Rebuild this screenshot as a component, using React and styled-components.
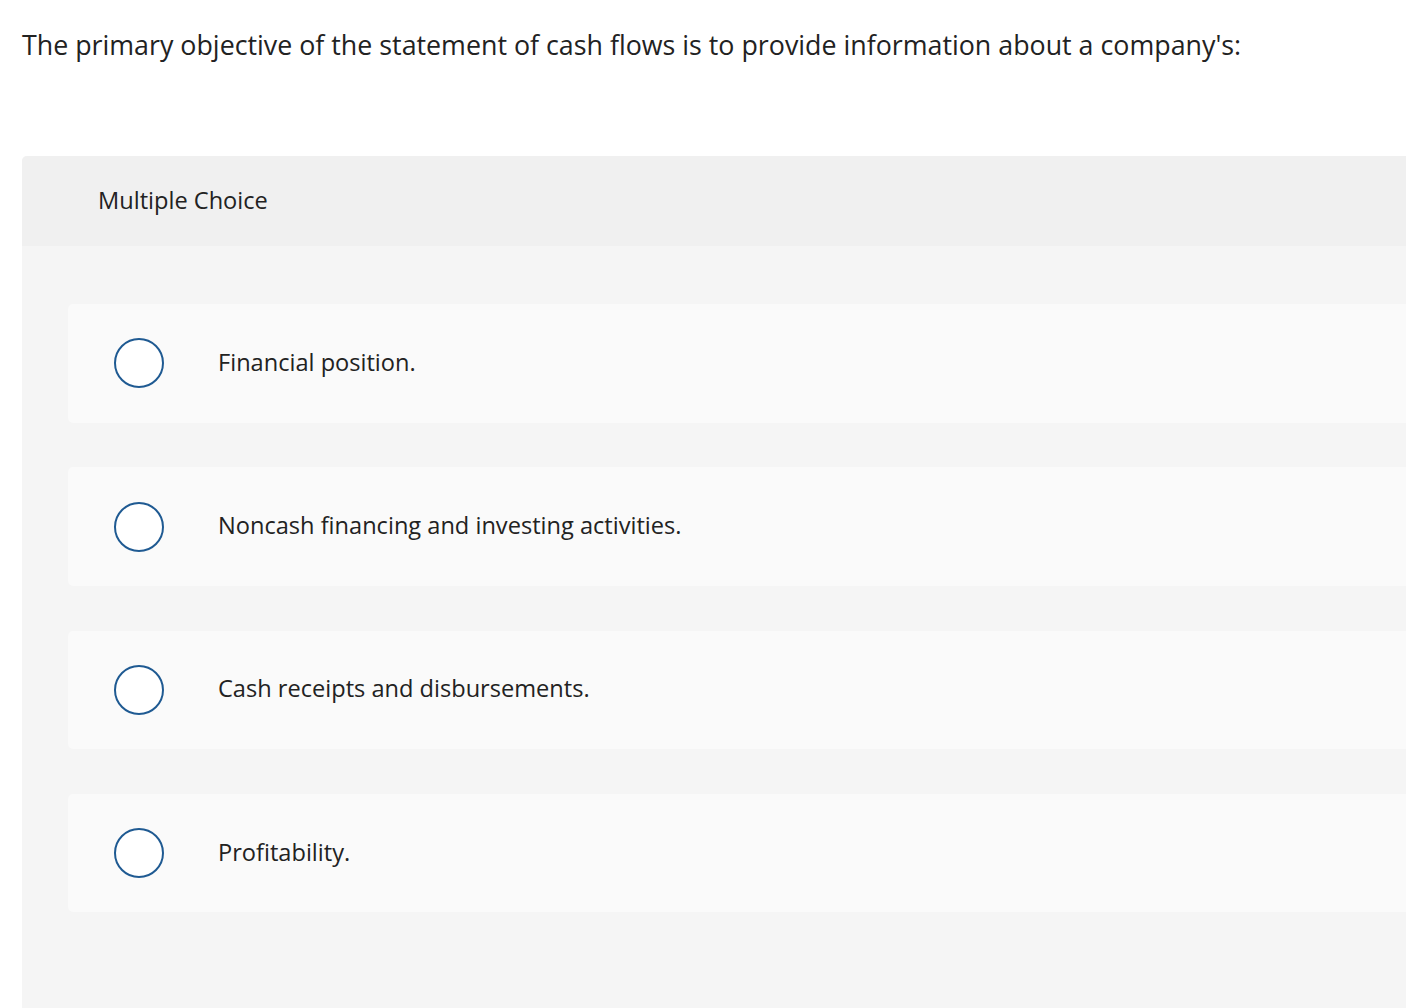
import React from 'react'
import styled, { createGlobalStyle } from 'styled-components'

const GlobalStyle = createGlobalStyle`
  html, body {
    margin: 0;
    padding: 0;
    background: #fff;
    overflow: hidden;
  }
  body {
    font-family: "Open Sans", Lato, Arial, sans-serif;
    font-variant-ligatures: none;
    color: #222;
  }
`

const Page = styled.div`
  padding: 0 0 0 22px;
  width: 1450px;
`

const Question = styled.p`
  margin: 0;
  padding-top: 27px;
  font-size: 26.8px;
  line-height: 36px;
  color: #222;
`

const Panel = styled.section`
  margin-top: 93px;
  border-radius: 5px 5px 0 0;
  overflow: hidden;
  background: #f5f5f5;
`

const PanelHeader = styled.header`
  box-sizing: border-box;
  height: 90px;
  display: flex;
  align-items: center;
  padding: 0 0 2px 76px;
  background: #f0f0f0;
  font-size: 23.6px;
  color: #222;
`

const ChoiceList = styled.div`
  display: flex;
  flex-direction: column;
  gap: 44.8px;
  padding: 58px 0 96px 46px;
`

const Choice = styled.label`
  display: flex;
  align-items: center;
  height: 118.5px;
  padding-left: 46px;
  background: #fafafa;
  border-radius: 5px 0 0 5px;
  cursor: pointer;
`

const Radio = styled.span`
  flex: none;
  box-sizing: border-box;
  width: 50px;
  height: 50px;
  border: 2px solid #1f5a92;
  border-radius: 50%;
  background: #fff;
`

const ChoiceText = styled.span`
  margin: 0 0 3px 54px;
  font-size: 23.6px;
  color: #222;
`

const choices = [
  'Financial position.',
  'Noncash financing and investing activities.',
  'Cash receipts and disbursements.',
  'Profitability.',
]

export default function App() {
  return (
    <>
      <GlobalStyle />
      <Page>
        <Question>
          The primary objective of the statement of cash flows is to provide information about a company's:
        </Question>
        <Panel>
          <PanelHeader>Multiple Choice</PanelHeader>
          <ChoiceList>
            {choices.map((c) => (
              <Choice key={c}>
                <Radio />
                <ChoiceText>{c}</ChoiceText>
              </Choice>
            ))}
          </ChoiceList>
        </Panel>
      </Page>
    </>
  )
}
